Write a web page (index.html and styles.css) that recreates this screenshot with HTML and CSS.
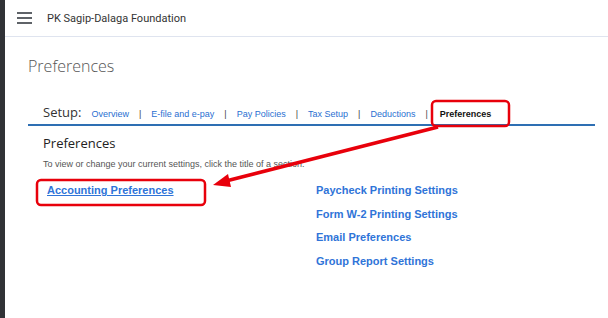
FILE: index.html
```html
<!DOCTYPE html>
<html>

<head>
    <title>Preferences</title>
    <link rel="stylesheet" href="styles.css">
</head>

<body>
    <div class="rail"></div>
    <div class="app">
        <div class="topbar">
            <svg class="menu" width="15" height="12" viewBox="0 0 15 12">
                <rect x="0" y="0" width="15" height="2" fill="#5f6368"/>
                <rect x="0" y="5" width="15" height="2" fill="#5f6368"/>
                <rect x="0" y="10" width="15" height="2" fill="#5f6368"/>
            </svg>
            <span class="company">PK Sagip-Dalaga Foundation</span>
        </div>

        <div class="page">
            <h1 class="page-title">Preferences</h1>

            <div class="setup">
                <span class="setup-label">Setup:</span>
                <a href="#">Overview</a>
                <span class="sep">|</span>
                <a href="#">E-file and e-pay</a>
                <span class="sep">|</span>
                <a href="#">Pay Policies</a>
                <span class="sep">|</span>
                <a href="#">Tax Setup</a>
                <span class="sep">|</span>
                <a href="#">Deductions</a>
                <span class="sep">|</span>
                <span class="current">Preferences</span>
            </div>

            <div class="section">
                <h2>Preferences</h2>
                <p class="hint">To view or change your current settings, click the title of a section.</p>
                <div class="columns">
                    <div class="col">
                        <a href="#" class="pref-link first">Accounting Preferences</a>
                    </div>
                    <div class="col">
                        <a href="#" class="pref-link">Paycheck Printing Settings</a>
                        <a href="#" class="pref-link">Form W-2 Printing Settings</a>
                        <a href="#" class="pref-link">Email Preferences</a>
                        <a href="#" class="pref-link">Group Report Settings</a>
                    </div>
                </div>
            </div>
        </div>
    </div>

    <!-- annotation overlay -->
    <svg class="marks" width="608" height="318" viewBox="0 0 608 318">
        <rect x="432" y="101" width="77" height="25" rx="4" fill="none" stroke="#e8000b" stroke-width="2.5"/>
        <rect x="37" y="180" width="168" height="25" rx="4" fill="none" stroke="#e8000b" stroke-width="2.5"/>
        <line x1="438" y1="127" x2="226" y2="181" stroke="#e8000b" stroke-width="3.5"/>
        <polygon points="213,185 228,174 231,187" fill="#e8000b"/>
    </svg>
</body>

</html>
```

FILE: styles.css
```css
body {
    margin: 0;
    display: flex;
    min-height: 318px;
    background: #fff;
    font-family: "Liberation Sans", Arial, sans-serif;
}

.rail {
    width: 5px;
    background: #303236;
    flex-shrink: 0;
}

.app {
    flex: 1;
}

.topbar {
    height: 36px;
    border-bottom: 1px solid #dfe4ef;
    display: flex;
    align-items: center;
    padding-left: 12px;
}

.menu {
    display: block;
}

.company {
    margin-left: 15px;
    font-family: Roboto, sans-serif;
    font-size: 11px;
    color: #333;
}

.page {
    padding: 0 13px 0 23px;
}

.page-title {
    margin: 17px 0 0;
    font-family: "Open Sans", sans-serif;
    font-weight: 300;
    font-size: 16px;
    color: #555;
    line-height: 24px;
}

.setup {
    margin-top: 25px;
    padding: 0 0 3px 15px;
    border-bottom: 2px solid #2e6fb3;
    display: flex;
    align-items: baseline;
    font-size: 9px;
}

.setup-label {
    font-family: "Open Sans", sans-serif;
    font-size: 13px;
    color: #333;
    margin-right: 10px;
}

.setup a {
    color: #2a6fd1;
    text-decoration: none;
}

.sep {
    color: #444;
    margin: 0 10px;
}

.current {
    color: #111;
    font-weight: bold;
    margin-left: 2px;
}

.section {
    padding-left: 15px;
}

.section h2 {
    margin: 7px 0 0;
    font-family: "Open Sans", sans-serif;
    font-weight: 400;
    font-size: 13px;
    color: #222;
    line-height: 20px;
}

.hint {
    margin: 6px 0 0;
    font-size: 9px;
    color: #555;
}

.columns {
    display: flex;
    margin-top: 15px;
}

.col {
    display: flex;
    flex-direction: column;
}

.col:first-child {
    width: 269px;
    padding-left: 4px;
}

.pref-link {
    color: #2f74d8;
    font-weight: bold;
    font-size: 11px;
    text-decoration: none;
    line-height: 13px;
    margin-bottom: 10.5px;
}

.pref-link.first {
    text-decoration: underline;
}

.marks {
    position: absolute;
    left: 0;
    top: 0;
    pointer-events: none;
}
```
